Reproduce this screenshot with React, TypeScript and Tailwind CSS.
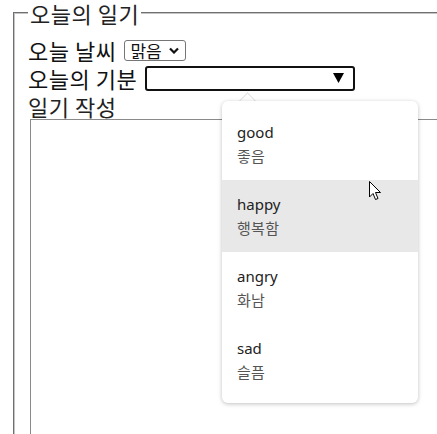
import React from "react";

const items = [
  { en: "good", ko: "좋음", active: false },
  { en: "happy", ko: "행복함", active: true },
  { en: "angry", ko: "화남", active: false },
  { en: "sad", ko: "슬픔", active: false },
];

export default function App() {
  return (
    <div
      className="relative w-[437px] h-[434px] overflow-hidden bg-white text-[#111]"
      style={{ fontFamily: '"Noto Sans CJK KR", "Noto Sans", sans-serif' }}
    >
      <fieldset className="ml-[13px] mt-[2px] w-[520px] h-[520px] border-2 border-[#c4c4c4] [border-style:groove] pl-[13px] pt-[13px]">
        <legend className="px-[2px] text-[22px] leading-[22px] tracking-[0.5px] text-[#222]">오늘의 일기</legend>
        <div className="flex items-center h-[26px] text-[22px] leading-[24px] tracking-[0.5px]">
          <span>오늘 날씨</span>
          <div className="ml-[8px] flex items-center h-[21px] w-[62px] border border-[#767676] rounded-[3px] pl-[5px] text-[17px] leading-[19px] tracking-normal">
            <span>맑음</span>
            <svg className="ml-[7px]" width="10" height="7" viewBox="0 0 10 7">
              <path d="M1 1.5 L5 5.5 L9 1.5" fill="none" stroke="#111" strokeWidth="2.2" />
            </svg>
          </div>
        </div>
        <div className="flex items-center h-[30px] text-[22px] leading-[26px] tracking-[0.5px]">
          <span>오늘의 기분</span>
          <div className="ml-[8px] relative h-[25px] w-[210px] border-2 border-[#111] rounded-[3px]">
            <svg className="absolute right-[9px] top-[5px]" width="11" height="10" viewBox="0 0 11 10">
              <path d="M0 0 H11 L5.5 10 Z" fill="#000" />
            </svg>
          </div>
        </div>
        <div className="flex items-center h-[26px] text-[22px] leading-[24px] tracking-[0.5px] text-[#222]">
          <span>일기 작성</span>
        </div>
        <div className="ml-[2px] w-[480px] h-[400px] border border-[#8a8a8a]" />
      </fieldset>

      {/* dropdown popup */}
      <div className="absolute left-[222px] top-[101px] w-[196px]">
        <div className="absolute left-[19px] top-[-6px] w-[13px] h-[13px] rotate-45 bg-white border-l border-t border-[#e4e4e4]" />
        <div
          className="relative bg-white rounded-[6px] py-[7px] shadow-[0_1px_4px_rgba(0,0,0,0.25)]"
          style={{ fontFamily: '"Noto Sans", "Noto Sans CJK KR", sans-serif' }}
        >
          {items.map((it) => (
            <div
              key={it.en}
              className={`h-[72px] pl-[15px] pt-[12px] ${it.active ? "bg-[#e8e8e8]" : ""}`}
            >
              <div className="text-[15px] leading-[24px] text-[#222]">{it.en}</div>
              <div
                className="text-[15px] leading-[24px] tracking-[0.3px] text-[#555]"
                style={{ fontFamily: '"Noto Sans CJK KR", sans-serif' }}
              >
                {it.ko}
              </div>
            </div>
          ))}
        </div>
      </div>

      {/* cursor */}
      <svg className="absolute left-[369px] top-[181px]" width="13" height="20" viewBox="0 0 13 20">
        <path
          d="M0.5 0.5 L0.5 16 L4 12.5 L6.5 18.5 L9 17.5 L6.5 11.5 L11.5 11.5 Z"
          fill="#fff"
          stroke="#000"
          strokeWidth="1"
          strokeLinejoin="miter"
        />
      </svg>
    </div>
  );
}
